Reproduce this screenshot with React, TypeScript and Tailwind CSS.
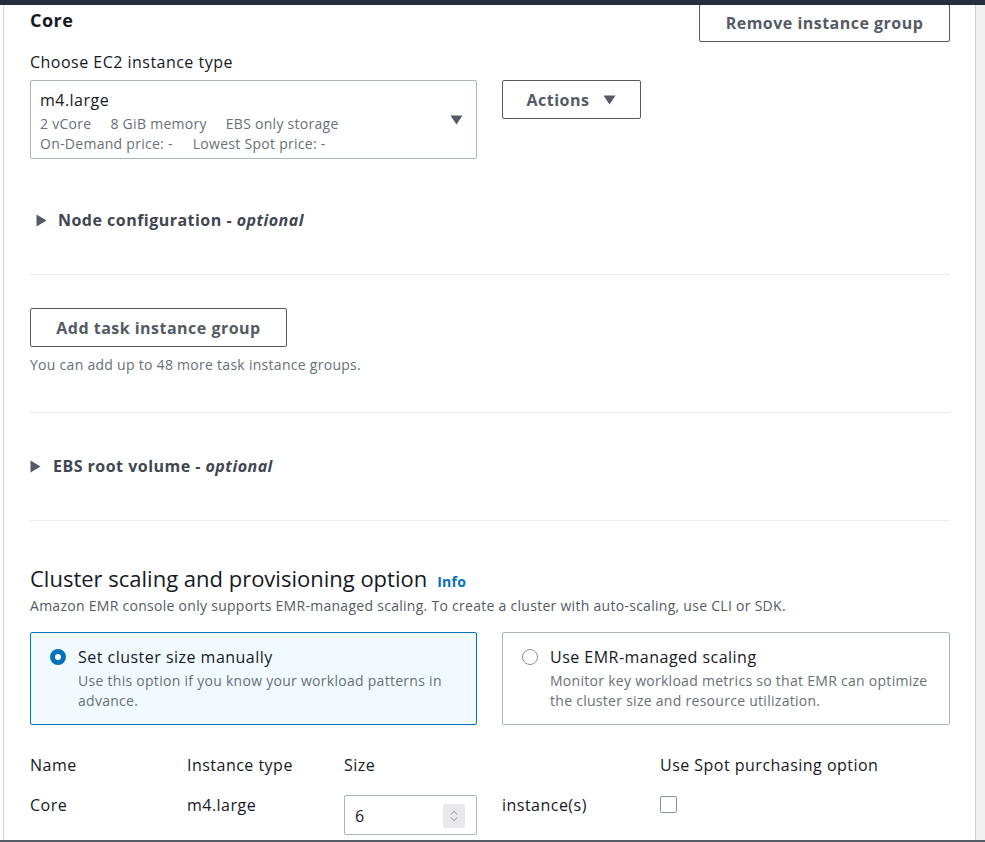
import React from "react";

function Caret({ className = "" }: { className?: string }) {
  return (
    <svg width="13" height="10" viewBox="0 0 13 10" className={className}>
      <path d="M0.5 0.5 L12.5 0.5 L6.5 9.5 Z" fill="#545b64" />
    </svg>
  );
}

function RightTri() {
  return (
    <svg width="11" height="13" viewBox="0 0 11 13">
      <path d="M0.5 0.5 L10.5 6.5 L0.5 12.5 Z" fill="#545b64" />
    </svg>
  );
}

export default function App() {
  return (
    <div className="relative w-[985px] h-[842px] overflow-hidden bg-white font-['Open_Sans',sans-serif] text-[#16191f] tracking-[0.03em]">
      <div className="absolute top-0 left-0 right-0 h-[5px] bg-[#232f3e] z-10" />
      <div className="absolute bottom-0 left-0 right-0 h-[2px] bg-[#545b64] z-10" />
      <div className="flex h-full">
        <div className="w-[3px]" />
        <div className="w-px bg-[#d5dbdb]" />
        <main className="flex-1 pl-[26px] pr-[25px] flex flex-col">
          {/* Header row */}
          <div className="flex justify-between items-start h-[42px]">
            <div className="pt-[9px] text-[18px] leading-[22px] font-bold">Core</div>
            <button className="mt-[4px] h-[38px] w-[251px] border border-[#545b64] rounded-[2px] text-[16px] font-bold text-[#545b64] flex items-center justify-center">
              Remove instance group
            </button>
          </div>
          <div className="mt-[8px] text-[16px] leading-[24px]">Choose EC2 instance type</div>
          <div className="mt-[6px] flex items-start gap-[25px]">
            <div className="w-[447px] h-[79px] border border-[#aab7b8] rounded-[2px] pl-[9px] pr-[13px] flex items-center">
              <div className="flex-1 self-start">
                <div className="pt-[8px] text-[16px] leading-[22px]">m4.large</div>
                <div className="mt-[3px] text-[14px] leading-[20px] tracking-[0.02em] text-[#687078] flex gap-[19px]">
                  <span>2 vCore</span>
                  <span>8 GiB memory</span>
                  <span>EBS only storage</span>
                </div>
                <div className="text-[14px] leading-[20px] tracking-[0.02em] text-[#687078] flex gap-[20px]">
                  <span>On-Demand price: -</span>
                  <span>Lowest Spot price: -</span>
                </div>
              </div>
              <Caret />
            </div>
            <button className="h-[39px] w-[139px] border border-[#545b64] rounded-[2px] text-[16px] font-bold text-[#545b64] flex items-center justify-center gap-[14px]">
              <span>Actions</span>
              <Caret />
            </button>
          </div>

          <div className="mt-[49px] flex items-center h-[24px] pl-[6px] gap-[11px] text-[16px] font-bold text-[#414750]">
            <RightTri />
            <span>
              Node configuration - <i>optional</i>
            </span>
          </div>

          <div className="mt-[42px] h-px bg-[#eaeded]" />

          <button className="mt-[33px] h-[39px] w-[257px] border border-[#545b64] rounded-[2px] text-[16px] font-bold text-[#545b64] flex items-center justify-center">
            Add task instance group
          </button>
          <div className="mt-[8px] text-[14px] leading-[20px] tracking-[0.02em] text-[#687078]">
            You can add up to 48 more task instance groups.
          </div>

          <div className="mt-[37px] h-px bg-[#eaeded]" />

          <div className="mt-[41px] flex items-center h-[24px] gap-[12px] text-[16px] font-bold text-[#414750]">
            <RightTri />
            <span>
              EBS root volume - <i>optional</i>
            </span>
          </div>

          <div className="mt-[42px] h-px bg-[#eaeded]" />

          <div className="mt-[43px] flex items-baseline h-[28px]">
            <span className="text-[22px] leading-[28px] tracking-normal">Cluster scaling and provisioning option</span>
            <span className="ml-[10px] text-[14px] tracking-[0.02em] font-bold text-[#0073bb]">Info</span>
          </div>
          <div className="mt-[4px] text-[14px] leading-[20px] tracking-[0.02em] text-[#545b64]">
            Amazon EMR console only supports EMR-managed scaling. To create a cluster with auto-scaling, use CLI or SDK.
          </div>

          <div className="mt-[16px] flex gap-[25px]">
            <div className="w-[447px] h-[93px] border border-[#0073bb] bg-[#f1faff] rounded-[2px] pl-[19px] pt-[12px] flex gap-[12px]">
              <div className="mt-[4px] w-4 h-4 rounded-full border-[5px] border-[#0073bb] bg-white shrink-0" />
              <div>
                <div className="text-[16px] leading-[24px]">Set cluster size manually</div>
                <div className="mt-[2px] text-[14px] leading-[20px] tracking-[0.02em] text-[#687078]">
                  Use this option if you know your workload patterns in advance.
                </div>
              </div>
            </div>
            <div className="w-[448px] h-[93px] border border-[#aab7b8] rounded-[2px] pl-[19px] pt-[12px] pr-[8px] flex gap-[12px]">
              <div className="mt-[4px] w-4 h-4 rounded-full border-[1.5px] border-[#879596] bg-white shrink-0" />
              <div>
                <div className="text-[16px] leading-[24px]">Use EMR-managed scaling</div>
                <div className="mt-[2px] text-[14px] leading-[20px] tracking-[0.02em] text-[#687078]">
                  Monitor key workload metrics so that EMR can optimize the cluster size and resource utilization.
                </div>
              </div>
            </div>
          </div>

          <div className="mt-[28px] grid grid-cols-[157px_157px_158px_158px_1fr] text-[16px] leading-[24px]">
            <div>Name</div>
            <div>Instance type</div>
            <div>Size</div>
            <div />
            <div>Use Spot purchasing option</div>
          </div>
          <div className="mt-[18px] grid grid-cols-[157px_157px_158px_158px_1fr] text-[16px] leading-[20px]">
            <div>Core</div>
            <div>m4.large</div>
            <div>
              <div className="w-[133px] h-[40px] border border-[#aab7b8] rounded-[2px] pl-[10px] pr-[11px] flex items-center justify-between">
                <span className="mt-[2px]">6</span>
                <div className="mt-[2px] w-[22px] h-[24px] bg-[#e9e9ed] rounded-[2px] flex flex-col items-center justify-center gap-[2px]">
                  <svg width="8" height="5" viewBox="0 0 8 5">
                    <path d="M1 4.5 L4 1.2 L7 4.5" stroke="#8d8d94" strokeWidth="1" fill="none" />
                  </svg>
                  <svg width="8" height="5" viewBox="0 0 8 5">
                    <path d="M1 0.5 L4 3.8 L7 0.5" stroke="#8d8d94" strokeWidth="1" fill="none" />
                  </svg>
                </div>
              </div>
            </div>
            <div>instance(s)</div>
            <div>
              <div className="mt-[1px] w-[17px] h-[17px] border border-[#879596] rounded-[2px] bg-white" />
            </div>
          </div>
        </main>
        <div className="w-[10px] bg-[#f1f1f1] border-l border-[#cfcfcf]" />
      </div>
    </div>
  );
}
